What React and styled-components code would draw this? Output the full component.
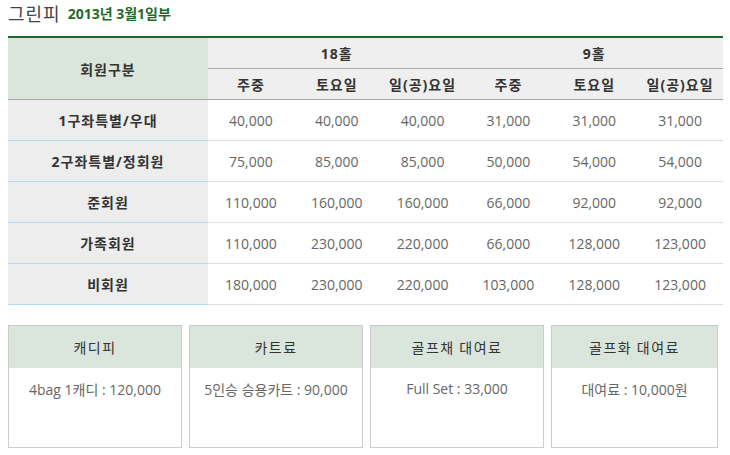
import React from "react";
import styled, { createGlobalStyle } from "styled-components";

const GlobalStyle = createGlobalStyle`
  body {
    margin: 0;
    background: #fff;
    font-family: "Open Sans", "Noto Sans CJK KR", sans-serif;
  }
`;

const Page = styled.div`
  padding: 0 8px;
  width: 715px;
`;

const Title = styled.h2`
  margin: 0 0 10px;
  height: 26px;
  display: flex;
  align-items: center;
  gap: 7px;
  font-size: 18px;
  font-weight: 400;
  color: #444;
  letter-spacing: 1px;
  font-family: "Noto Sans CJK KR", sans-serif;
`;

const Since = styled.span`
  font-size: 14px;
  font-weight: 700;
  color: #1f6a2b;
  letter-spacing: 0;
  font-family: "Open Sans", "Noto Sans CJK KR", sans-serif;
`;

const Table = styled.table`
  width: 715px;
  border-collapse: collapse;
  border-top: 2px solid #23692e;
  table-layout: fixed;
  font-size: 14px;
`;

const Head = styled.th`
  height: ${(p) => p.$h || 30}px;
  padding: 0;
  font-weight: 700;
  color: #333;
  background: ${(p) => (p.$green ? "#dae5dc" : "#efefef")};
  border-bottom: 1px solid ${(p) => (p.$line ? "#a8a8a8" : "transparent")};
  font-family: "Open Sans", "Noto Sans CJK KR", sans-serif;
  letter-spacing: 1px;
`;

const Label = styled.th`
  height: 40px;
  padding: 0;
  font-weight: 700;
  color: #333;
  background: #ededed;
  border-bottom: 1px solid #b7dbee;
  letter-spacing: 1px;
  font-family: "Open Sans", "Noto Sans CJK KR", sans-serif;
`;

const Cell = styled.td`
  padding: 0;
  text-align: center;
  color: #666;
  border-bottom: 1px solid #dddddd;
`;

const Cards = styled.div`
  margin-top: 20px;
  display: grid;
  grid-template-columns: 174px 174px 174px 167px;
  gap: 7px;
`;

const Card = styled.div`
  border: 1px solid #cccccc;
  height: 121px;
  display: flex;
  flex-direction: column;
`;

const CardHead = styled.div`
  height: 42px;
  background: #dae5dc;
  display: flex;
  align-items: center;
  justify-content: center;
  color: #333;
  font-size: 14px;
  font-family: "Noto Sans CJK KR", sans-serif;
  letter-spacing: 1.5px;
`;

const CardBody = styled.div`
  padding-top: 11px;
  text-align: center;
  color: #666;
  font-size: 14px;
`;

const days = ["주중", "토요일", "일(공)요일"];

const rows = [
  ["1구좌특별/우대", "40,000", "40,000", "40,000", "31,000", "31,000", "31,000"],
  ["2구좌특별/정회원", "75,000", "85,000", "85,000", "50,000", "54,000", "54,000"],
  ["준회원", "110,000", "160,000", "160,000", "66,000", "92,000", "92,000"],
  ["가족회원", "110,000", "230,000", "220,000", "66,000", "128,000", "123,000"],
  ["비회원", "180,000", "230,000", "220,000", "103,000", "128,000", "123,000"],
];

const extras = [
  ["캐디피", "4bag 1캐디 : 120,000"],
  ["카트료", "5인승 승용카트 : 90,000"],
  ["골프채 대여료", "Full Set : 33,000"],
  ["골프화 대여료", "대여료 : 10,000원"],
];

export default function App() {
  return (
    <Page>
      <GlobalStyle />
      <Title>
        그린피 <Since>2013년 3월1일부</Since>
      </Title>
      <Table>
        <colgroup>
          <col style={{ width: 200 }} />
          {Array.from({ length: 6 }).map((_, i) => (
            <col key={i} />
          ))}
        </colgroup>
        <thead>
          <tr>
            <Head rowSpan={2} $green $line>
              회원구분
            </Head>
            <Head colSpan={3} $line>
              18홀
            </Head>
            <Head colSpan={3} $line>
              9홀
            </Head>
          </tr>
          <tr>
            {[...days, ...days].map((d, i) => (
              <Head key={i} $line $h={30}>
                {d}
              </Head>
            ))}
          </tr>
        </thead>
        <tbody>
          {rows.map(([label, ...vals]) => (
            <tr key={label}>
              <Label>{label}</Label>
              {vals.map((v, i) => (
                <Cell key={i}>{v}</Cell>
              ))}
            </tr>
          ))}
        </tbody>
      </Table>
      <Cards>
        {extras.map(([head, body]) => (
          <Card key={head}>
            <CardHead>{head}</CardHead>
            <CardBody>{body}</CardBody>
          </Card>
        ))}
      </Cards>
    </Page>
  );
}
